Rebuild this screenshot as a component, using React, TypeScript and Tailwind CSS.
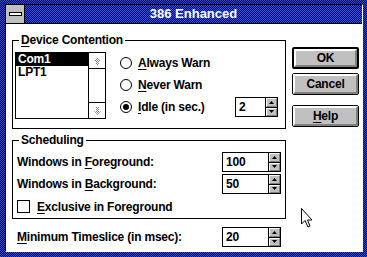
import React from "react";

const font = "font-[family-name:'Liberation_Sans',Arial,sans-serif] font-bold text-[12px] tracking-[-0.2px] text-black";

function Tri({ up }: { up?: boolean }) {
  return (
    <svg width="5" height="3" viewBox="0 0 5 3">
      <polygon points={up ? "2.5,0 5,3 0,3" : "0,0 5,0 2.5,3"} fill="#000" />
    </svg>
  );
}

function SpinHalf({ up }: { up?: boolean }) {
  return (
    <div className="flex flex-1 items-center justify-center border-t border-l border-r border-b border-t-white border-l-white border-r-[#808080] border-b-[#808080] bg-[#c0c0c0]">
      <Tri up={up} />
    </div>
  );
}

function Spinner({ value, className }: { value: string; className: string }) {
  return (
    <div className={`flex h-[20px] ${className}`}>
      <div className="flex-1 border border-black bg-white pl-[3px] leading-[18px]">{value}</div>
      <div className="flex w-[12px] flex-col border border-l-0 border-black">
        <SpinHalf up />
        <div className="h-px bg-black" />
        <SpinHalf />
      </div>
    </div>
  );
}

function ScrollArrow({ up }: { up?: boolean }) {
  return (
    <div className={`flex h-[16px] items-center justify-center bg-white ${up ? "border-b" : "border-t"} border-black`}>
      <svg width="7" height="8" viewBox="0 0 7 8">
        <defs>
          <pattern id={up ? "du" : "dd"} width="2" height="2" patternUnits="userSpaceOnUse">
            <rect width="1" height="1" fill="#808080" />
            <rect x="1" y="1" width="1" height="1" fill="#808080" />
          </pattern>
        </defs>
        <polygon
          points={up ? "3.5,0 7,4 5,4 5,8 2,8 2,4 0,4" : "2,0 5,0 5,4 7,4 3.5,8 0,4 2,4"}
          fill={`url(#${up ? "du" : "dd"})`}
        />
      </svg>
    </div>
  );
}

function Radio({ checked }: { checked?: boolean }) {
  return (
    <div className="mr-[6px] flex h-[12px] w-[12px] items-center justify-center rounded-full border border-black bg-white">
      {checked && <div className="h-[6px] w-[6px] rounded-full bg-black" />}
    </div>
  );
}

function PushButton({ label, def, ul }: { label: string; def?: boolean; ul?: boolean }) {
  return (
    <div className={`flex h-[22px] w-[67px] rounded-[2px] border-black ${def ? "border-2" : "border"}`}>
      <div className="flex flex-1 items-center justify-center border-2 border-t-white border-l-white border-r-[#808080] border-b-[#808080] bg-[#c0c0c0]">
        {ul ? (
          <span>
            <span className="underline underline-offset-2">{label[0]}</span>
            {label.slice(1)}
          </span>
        ) : (
          label
        )}
      </div>
    </div>
  );
}

function U({ c }: { c: string }) {
  return <span className="underline underline-offset-2">{c}</span>;
}

function Cursor() {
  return (
    <svg width="12" height="20" viewBox="0 0 12 20" className="absolute left-[301px] top-[208px]">
      <polygon
        points="0.5,0.5 0.5,16 4,12.5 7,19 9,18 6.5,12 11,12"
        fill="#fff"
        stroke="#000"
        strokeWidth="1"
      />
    </svg>
  );
}

export default function App() {
  return (
    <div
      className={`relative h-[257px] w-[367px] overflow-hidden bg-[repeating-conic-gradient(#000060_0_25%,#2850c8_0_50%)] bg-[length:2px_2px] pt-[4px] pl-[5px] pr-[4px] pb-[5px] ${font}`}
    >
      <div className="flex h-full flex-col border-t border-l border-r border-b border-t-black border-l-black border-r-white border-b-white bg-white">
        {/* title bar */}
        <div className="flex h-[19px] border-b border-black">
          <div className="flex w-[19px] items-center justify-center border-r border-black bg-[#c0c0c0]">
            <div className="h-[4px] w-[13px] border border-black bg-white" />
          </div>
          <div className="flex flex-1 items-center justify-center bg-[repeating-conic-gradient(#000080_0_25%,#3058d0_0_50%)] bg-[length:2px_2px] text-[13px] leading-[18px] tracking-normal text-white">
            386 Enhanced
          </div>
        </div>

        {/* client */}
        <div className="flex flex-1 items-start pl-[6px]">
          <div className="flex w-[274px] flex-col pt-[9px]">
            <fieldset className="border border-black pr-[7px] pb-[9px] pl-[2px]">
              <legend className="ml-[4px] h-[14px] px-[2px] leading-[14px]">
                <U c="D" />evice Contention
              </legend>
              <div className="mt-[5px] flex">
                <div className="flex h-[67px] w-[91px] border border-black">
                  <div className="flex-1">
                    <div className="h-[13px] bg-black pl-[2px] leading-[13px] text-white">Com1</div>
                    <div className="h-[13px] pl-[2px] leading-[13px]">LPT1</div>
                  </div>
                  <div className="flex w-[17px] flex-col border-l border-black">
                    <ScrollArrow up />
                    <div className="flex-1" />
                    <ScrollArrow />
                  </div>
                </div>
                <div className="ml-[14px] flex flex-1 flex-col">
                  <div className="flex h-[22px] items-center">
                    <Radio />
                    <span>
                      <U c="A" />lways Warn
                    </span>
                  </div>
                  <div className="flex h-[22px] items-center">
                    <Radio />
                    <span>
                      <U c="N" />ever Warn
                    </span>
                  </div>
                  <div className="flex h-[22px] items-center">
                    <Radio checked />
                    <span>
                      <U c="I" />dle (in sec.)
                    </span>
                    <Spinner value="2" className="ml-auto w-[43px]" />
                  </div>
                </div>
              </div>
            </fieldset>

            <fieldset className="mt-[4px] border border-black pr-[4px] pb-[1px] pl-[4px]">
              <legend className="ml-[2px] h-[14px] px-[2px] leading-[14px]">Scheduling</legend>
              <div className="mt-[5px] flex h-[20px] items-center justify-between">
                <span>
                  Windows in <U c="F" />oreground:
                </span>
                <Spinner value="100" className="w-[59px]" />
              </div>
              <div className="mt-[2px] flex h-[20px] items-center justify-between">
                <span>
                  Windows in <U c="B" />ackground:
                </span>
                <Spinner value="50" className="w-[59px]" />
              </div>
              <div className="mt-[2px] flex h-[21px] items-center">
                <div className="mr-[7px] h-[13px] w-[13px] border border-black bg-white" />
                <span>
                  <U c="E" />xclusive in Foreground
                </span>
              </div>
            </fieldset>

            <div className="mt-[8px] flex h-[20px] items-center justify-between pr-[5px] pl-[5px]">
              <span>
                <U c="M" />inimum Timeslice (in msec):
              </span>
              <Spinner value="20" className="w-[59px]" />
            </div>
          </div>

          <div className="ml-[6px] flex flex-col pt-[23px]">
            <PushButton label="OK" def />
            <div className="mt-[4px]">
              <PushButton label="Cancel" />
            </div>
            <div className="mt-[10px]">
              <PushButton label="Help" ul />
            </div>
          </div>
        </div>
      </div>
      <Cursor />
    </div>
  );
}
